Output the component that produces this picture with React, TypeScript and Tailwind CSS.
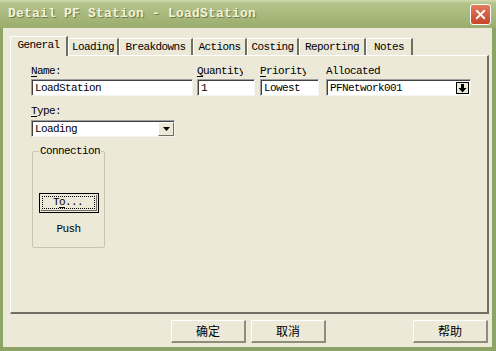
import { X } from 'lucide-react';

const mono = { fontFamily: '"Liberation Mono", "DejaVu Sans Mono", monospace' };

const tabs = [
  { t: 'General', w: 58 },
  { t: 'Loading', w: 51 },
  { t: 'Breakdowns', w: 74 },
  { t: 'Actions', w: 54 },
  { t: 'Costing', w: 52 },
  { t: 'Reporting', w: 67 },
  { t: 'Notes', w: 47 },
];

function Label({ text, u, width }: { text: string; u?: boolean; width: number }) {
  return (
    <div
      className="h-[14px] overflow-hidden whitespace-nowrap text-[11px] leading-[14px] tracking-[-0.6px] text-black"
      style={{ ...mono, width }}
    >
      {u ? (
        <>
          <span className="underline underline-offset-2">{text[0]}</span>
          {text.slice(1)}
        </>
      ) : (
        text
      )}
    </div>
  );
}

function Field({ value, width }: { value: string; width: number }) {
  return (
    <div
      className="h-[17px] border-t border-l border-t-[#a0a0a0] border-l-[#a0a0a0] border-b border-r border-b-[#f5f5f0] border-r-[#f5f5f0] bg-white"
      style={{ width }}
    >
      <div className="h-full border-t border-l border-t-[#404040] border-l-[#404040] pl-[2px] text-[11px] leading-[15px] tracking-[-0.6px] text-black" style={mono}>
        {value}
      </div>
    </div>
  );
}

function Btn({ label, w }: { label: string; w: number }) {
  return (
    <div
      className="flex h-[23px] items-center justify-center border-t border-l border-t-white border-l-white border-b-2 border-r-2 border-b-[#8f8c7a] border-r-[#8f8c7a] bg-[#ECE9D8] text-[12px] text-black"
      style={{ width: w, fontFamily: '"Noto Sans CJK SC", sans-serif' }}
    >
      {label}
    </div>
  );
}

export default function App() {
  return (
    <div className="flex h-[351px] w-[496px] flex-col overflow-hidden bg-[#8ea366]">
      {/* title bar */}
      <div className="flex h-[28px] shrink-0 items-center justify-between bg-[linear-gradient(to_bottom,#d2dbaf_0%,#b4c38a_12%,#a8b87c_55%,#9aac6e_100%)] pl-[8px] pr-[5px]">
        <span
          className="text-[13px] font-bold tracking-[0.2px] text-[#f3f1dc] [text-shadow:1px_1px_0_#6d7d45]"
          style={mono}
        >
          Detail PF Station - LoadStation
        </span>
        <div className="flex h-[21px] w-[21px] items-center justify-center rounded-[3px] border border-white bg-[linear-gradient(to_bottom,#e27a5c,#c7462a)]">
          <X className="h-[15px] w-[15px] text-white" strokeWidth={3} />
        </div>
      </div>

      {/* body */}
      <div className="ml-[3px] mr-[4px] mb-[4px] flex flex-1 flex-col bg-[#ECE9D8]">
        {/* tabs */}
        <div className="ml-[7px] mt-[8px] flex h-[19px] items-end text-[11px] tracking-[-0.6px] text-black" style={mono}>
          {tabs.map(({ t, w }, i) =>
            i === 0 ? (
              <div
                key={t}
                className="relative z-10 -mb-px flex h-[20px] items-center justify-center border-t border-l border-t-white border-l-white border-r-2 border-r-[#716f64] bg-[#ECE9D8] pb-[3px]"
                style={{ width: w }}
              >
                {t}
              </div>
            ) : (
              <div
                key={t}
                className="flex h-[17px] items-center justify-center border-t border-l border-t-white border-l-white border-r-2 border-r-[#716f64] bg-[#ECE9D8]"
                style={{ width: w }}
              >
                {t}
              </div>
            ),
          )}
        </div>

        {/* panel */}
        <div className="ml-[7px] h-[259px] w-[479px] border-t border-l border-t-white border-l-white border-b-2 border-r-2 border-b-[#716f64] border-r-[#716f64]">
          <div className="ml-[20px] mt-[8px] flex">
            <div className="flex w-[166px] flex-col gap-[1px]">
              <Label text="Name:" u width={166} />
              <Field value="LoadStation" width={162} />
            </div>
            <div className="flex w-[63px] flex-col gap-[1px]">
              <Label text="Quantity" u width={46} />
              <Field value="1" width={58} />
            </div>
            <div className="flex w-[66px] flex-col gap-[1px]">
              <Label text="Priority" u width={46} />
              <Field value="Lowest" width={59} />
            </div>
            <div className="flex flex-col gap-[1px]">
              <Label text="Allocated" width={100} />
              <div className="relative">
                <Field value="PFNetwork001" width={145} />
                <div className="absolute right-[2px] top-[3px] flex h-[12px] w-[13px] items-center justify-center border border-black bg-[#ECE9D8]">
                  <svg width="9" height="9" viewBox="0 0 9 9">
                    <path d="M3 0h3v4h2.5L4.5 8.5 0.5 4H3z" fill="black" />
                  </svg>
                </div>
              </div>
            </div>
          </div>

          <div className="ml-[20px] mt-[8px] flex flex-col gap-[2px]">
            <Label text="Type:" u width={60} />
            <div className="relative">
              <Field value="Loading" width={144} />
              <div className="absolute left-[127px] top-[2px] flex h-[14px] w-[16px] items-center justify-center border-t border-l border-t-white border-l-white border-b border-r border-b-[#716f64] border-r-[#716f64] bg-[#ECE9D8]">
                <svg width="7" height="4" viewBox="0 0 7 4">
                  <path d="M0 0h7L3.5 4z" fill="black" />
                </svg>
              </div>
            </div>
          </div>

          {/* group box */}
          <div className="relative ml-[21px] mt-[14px] flex h-[97px] w-[73px] flex-col items-center rounded-[2px] border border-[#c8c5b2]">
            <span
              className="absolute -top-[8px] left-[6px] bg-[#ECE9D8] px-[1px] text-[11px] leading-[14px] tracking-[-0.6px] text-black"
              style={mono}
            >
              Connection
            </span>
            <div className="mt-[41px] flex h-[20px] w-[60px] items-center justify-center border border-black bg-[#ECE9D8] p-[1px]">
              <div className="flex h-full w-full items-center justify-center border-b border-r border-b-[#716f64] border-r-[#716f64] p-[1px]">
                <div
                  className="flex h-full w-full items-center justify-center border border-dotted border-black text-[11px] tracking-[-0.6px] text-black"
                  style={mono}
                >
                  T<span className="underline underline-offset-2">o</span>...
                </div>
              </div>
            </div>
            <span className="mt-[8px] text-[11px] tracking-[-0.6px] text-black" style={mono}>
              Push
            </span>
          </div>
        </div>

        {/* buttons */}
        <div className="mt-[6px] flex">
          <div className="ml-[168px]">
            <Btn label="确定" w={75} />
          </div>
          <div className="ml-[5px]">
            <Btn label="取消" w={75} />
          </div>
          <div className="ml-[87px]">
            <Btn label="帮助" w={75} />
          </div>
        </div>
      </div>
    </div>
  );
}
